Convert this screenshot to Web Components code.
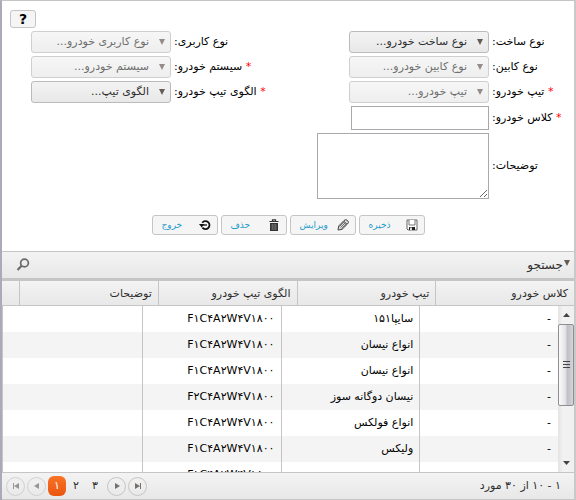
<!DOCTYPE html>
<html lang="fa" dir="rtl">
<head>
<meta charset="utf-8">
<title>تیپ خودرو</title>
<style>
  body { margin: 0; font: 11px/16px "DejaVu Sans", "Noto Sans", sans-serif; color: #000; background: #fff; }
</style>
</head>
<body>
<vehicle-page></vehicle-page>
<script>
class Base extends HTMLElement {
  constructor() { super(); this.attachShadow({ mode: "open" }); }
  connectedCallback() { this.shadowRoot.innerHTML = this.render(); }
}

customElements.define("select-field", class extends Base {
  render() {
    const off = this.hasAttribute("disabled");
    return `<style>
      :host { display: grid; grid-template-columns: var(--label, 82px) 1fr; column-gap: 3px; align-items: center; }
      label { text-align: left; }
      b { color: #f00; font-weight: normal; }
      select { appearance: none; box-sizing: border-box; justify-self: start; width: 140px; height: 22px; margin: 0; padding: 0 21px 0 4px;
        border: 1px solid #bbb; border-radius: 3px; font: inherit; color: #2e2e2e; opacity: 1;
        background: url("data:image/svg+xml,%3Csvg xmlns='http://www.w3.org/2000/svg' width='6' height='6'%3E%3Cpath d='M0 0h6L3 6z' fill='%23665c56'/%3E%3C/svg%3E") right 5px center no-repeat, linear-gradient(#f3f3f3, #e8e8e8); }
      select:disabled { opacity: .7; color: #2e2e2e; }
    </style>
    <label for="f">${this.hasAttribute("required") ? "<b>*</b> " : ""}${this.getAttribute("label")}:</label>
    <select id="f"${off ? " disabled" : ""}><option>${this.getAttribute("placeholder")}...</option></select>`;
  }
});

customElements.define("text-field", class extends Base {
  render() {
    const area = this.hasAttribute("multiline");
    return `<style>
      :host { display: grid; grid-template-columns: var(--label, 82px) 1fr; column-gap: 3px; align-items: center; }
      label { text-align: left; }
      b { color: #f00; font-weight: normal; }
      input, textarea { display: block; box-sizing: border-box; justify-self: start; margin: 0; padding: 2px; border: 1px solid #a9a9ad; background: #fff; font: inherit; }
      input { width: 138px; height: 24px; }
      textarea { width: 172px; height: 66px; }
    </style>
    <label for="f">${this.hasAttribute("required") ? "<b>*</b> " : ""}${this.getAttribute("label")}:</label>
    ${area ? '<textarea id="f" dir="ltr"></textarea>' : '<input id="f" type="text">'}`;
  }
});

customElements.define("form-column", class extends Base {
  render() {
    return `<style>:host { display: flex; flex-direction: column; gap: 3px; }</style><slot></slot>`;
  }
});

customElements.define("action-button", class extends Base {
  render() {
    return `<style>
      :host { display: block; }
      button { display: flex; align-items: center; justify-content: space-between; box-sizing: border-box; width: 66px; height: 20px; margin: 0;
        padding: 0 6px 0 9px; border: 1px solid #c5c5c5; border-radius: 3px; background: #f5f5f5; color: #1c9bcb; font: inherit; font-size: 9px; }
      ::slotted(svg) { width: 12px; height: 12px; display: block; }
    </style>
    <button type="button"><slot name="icon"></slot><span><slot></slot></span></button>`;
  }
});

customElements.define("help-button", class extends Base {
  render() {
    return `<style>
      :host { display: block; }
      button { display: block; box-sizing: border-box; width: 26px; height: 18px; margin: 0; padding: 0; border: 1px solid #c5c5c5; border-radius: 3px;
        background: #f5f5f5; color: #000; font: bold 14px/16px "DejaVu Sans", sans-serif; }
    </style><button type="button" aria-label="راهنما">?</button>`;
  }
});

customElements.define("search-bar", class extends Base {
  render() {
    return `<style>
      :host { display: flex; align-items: center; justify-content: space-between; height: 26px; padding: 0 4px 0 14px;
        border-top: 1px solid #c5c5c5; border-bottom: 3px solid #c5c5c5; background: linear-gradient(#f3f3f3, #e8e8e8); color: #2e2e2e; font-size: 12px; }
      button { display: flex; align-items: center; gap: 1px; border: 0; padding: 0; background: none; font: inherit; color: inherit; }
      button svg { margin-bottom: 4px; }
    </style>
    <button type="button"><svg width="6" height="6"><path d="M0 0h6L3 6z" fill="#665c56"/></svg><span>جستجو</span></button>
    <button type="button" aria-label="یافتن"><svg width="14" height="14" style="margin:0" viewBox="0 0 14 14" fill="none" stroke="#6b6b6b"><circle cx="8.5" cy="5" r="3.9" stroke-width="1.7"/><path d="M5.6 7.8 1.5 12" stroke-width="2.2"/></svg></button>`;
  }
});

customElements.define("scroll-bar", class extends Base {
  render() {
    return `<style>
      :host { display: flex; flex-direction: column; width: 16px; background: linear-gradient(90deg, #e3e3e3, #f2f2f2 30%, #f0f0f0); }
      button { display: grid; place-items: center; height: 18px; border: 0; padding: 0; background: none; }
      .thumb { display: grid; place-items: center; box-sizing: border-box; height: 82px; border: 1px solid #8f8f93; border-radius: 2px; background: linear-gradient(90deg, #fafafa, #e4e4e7 45%, #bfbfc6 60%, #d4d4da); }
      .space { flex: 1; }
      svg { display: block; }
    </style>
    <button type="button" aria-label="بالا"><svg width="7" height="4"><path d="M0 4h7L3.500 0z" fill="#444"/></svg></button>
    <div class="thumb"><svg width="7" height="8" stroke="#444"><path d="M0 .5h7M0 3.500h7M0 6.500h7"/></svg></div>
    <div class="space"></div>
    <button type="button" aria-label="پایین"><svg width="7" height="4"><path d="M0 0h7L3.500 4z" fill="#444"/></svg></button>`;
  }
});

const HEADS = ["کلاس خودرو", "تیپ خودرو", "الگوی تیپ خودرو", "توضیحات"];
const ROWS = [
  ["-", "سایپا۱۵۱", "F۱C۴A۲W۴V۱۸۰۰", ""],
  ["-", "انواع نیسان", "F۱C۴A۲W۴V۱۸۰۰", ""],
  ["-", "انواع نیسان", "F۱C۴A۲W۴V۱۸۰۰", ""],
  ["-", "نیسان دوگانه سوز", "F۲C۴A۲W۴V۱۸۰۰", ""],
  ["-", "انواع فولکس", "F۱C۴A۲W۴V۱۸۰۰", ""],
  ["-", "ولیکس", "F۱C۴A۲W۴V۱۸۰۰", ""],
  ["", "", "F۱C۴A۲W۴V۱۸۰۰", ""]
];

customElements.define("vehicle-grid", class extends Base {
  render() {
    return `<style>
      :host { display: block; }
      table { width: 100%; table-layout: fixed; border-collapse: separate; border-spacing: 0; }
      th, td { box-sizing: border-box; text-align: right; font-weight: normal; padding: 0 6px; white-space: nowrap; overflow: hidden; }
      .head { background: linear-gradient(#f3f3f3, #e8e8e8); border-bottom: 1px solid #c5c5c5; color: #2e2e2e; }
      .head th, .head td { height: 24px; }
      th { padding-top: 2px; border-left: 1px solid #c5c5c5; }
      .head .pad { width: 17px; border: 0; padding: 0; }
      .body { display: flex; height: 166px; border-left: 1px solid #c5c5c5; overflow: hidden; }
      .view { flex: 1; overflow: hidden; }
      td { height: 26px; border-left: 1px solid #c5c5c5; }
      td:first-child { padding: 0 7px; }
      td:last-child { border-left: 0; }
      tr:nth-child(even) td { background: #f4f4f4; }
    </style>
    <div class="head"><table><thead><tr>${HEADS.map(h => `<th scope="col">${h}</th>`).join("")}<td class="pad"></td></tr></thead></table></div>
    <div class="body"><scroll-bar></scroll-bar><div class="view"><table><tbody>${ROWS.map(r => `<tr>${r.map(c => `<td>${c}</td>`).join("")}</tr>`).join("")}</tbody></table></div></div>`;
  }
});

customElements.define("grid-pager", class extends Base {
  render() {
    const a = (label, d) => `<a href="#" class="nav" aria-label="${label}"><svg width="8" height="8" viewBox="0 0 8 8" fill="currentColor"><path d="${d}"/></svg></a>`;
    return `<style>
      :host { display: flex; align-items: center; justify-content: space-between; height: 26px; padding: 0 13px 0 4px; border-top: 1px solid #c5c5c5; border-bottom: 1px solid #c5c5c5;
        background: linear-gradient(#f3f3f3, #e8e8e8); color: #2e2e2e; }
      nav { display: flex; align-items: center; gap: 1px; direction: ltr; }
      a { display: grid; place-items: center; box-sizing: border-box; width: 18px; height: 20px; color: #2e2e2e; text-decoration: none; }
      .nav { width: 19px; height: 19px; border: 1px solid #c5c5c5; border-radius: 50%; color: #75706c; }
      .off { display: flex; gap: 2px; padding-right: 1px; opacity: .7; }
      .on { border-radius: 6px; background: linear-gradient(#f97327, #e9560f); color: #fff; }
      .last { display: flex; gap: 2px; padding-left: 2px; }
    </style>
    <span>۱ - ۱۰ از ۳۰ مورد</span>
    <nav aria-label="صفحه‌ها"><span class="off">${a("اولین", "M1 1h1v6H1zM7 1v6L2 4z")}${a("قبلی", "M6 1v6L1 4z")}</span>
    <a href="#" class="on" aria-current="page">۱</a><a href="#">۲</a><a href="#">۳</a>
    <span class="last">${a("بعدی", "M2 1v6l5-3z")}${a("آخرین", "M6 1h1v6H6zM1 1v6l5-3z")}</span></nav>`;
  }
});

customElements.define("vehicle-page", class extends Base {
  render() {
    return `<style>
      :host { display: block; border-left: 2px solid #a9abb9; border-right: 2px solid #c9c9c9; border-top: 1px solid #c5c5c5; }
      .top { display: flex; justify-content: flex-end; padding: 9px 0 3px 8px; }
      form { display: flex; margin: 0; }
      form-column:last-child { flex: 1; padding-left: 29px; --label: 1fr; }
      form-column:last-child > * { grid-template-columns: 1fr 140px; }
      .actions { display: flex; justify-content: center; gap: 3px; padding: 16px 0; }
    </style>
    <div class="top"><help-button></help-button></div>
    <form>
      <form-column>
        <select-field label="نوع ساخت" placeholder="نوع ساخت خودرو"></select-field>
        <select-field label="نوع کابین" placeholder="نوع کابین خودرو" disabled></select-field>
        <select-field label="تیپ خودرو" placeholder="تیپ خودرو" required disabled></select-field>
        <text-field label="کلاس خودرو" required></text-field>
        <text-field label="توضیحات" multiline></text-field>
      </form-column>
      <form-column>
        <select-field label="نوع کاربری" placeholder="نوع کاربری خودرو" disabled></select-field>
        <select-field label="سیستم خودرو" placeholder="سیستم خودرو" required disabled></select-field>
        <select-field label="الگوی تیپ خودرو" placeholder="الگوی تیپ" required></select-field>
      </form-column>
    </form>
    <div class="actions">
      <action-button><svg slot="icon" viewBox="0 0 12 12"><path d="M1 1h10v10H2l-1-1z" fill="#fff" stroke="#666"/><path d="M3 1v5h6V1" fill="#fff" stroke="#777"/><path d="M3 8h6v3H3z" fill="#222"/><path d="M4 8.500h2V11H4z" fill="#ddd"/></svg>ذخیره</action-button>
      <action-button><svg slot="icon" viewBox="0 0 12 12"><path d="M1 11 1.700 7 7 1.500Q8.800-.2 10.600 1.500T10.500 5L5 10.400z" fill="#ddd" stroke="#444"/><path d="M2.500 7.500 8 2M4.500 9.500 10 4M3.500 8.500 9 3M6.200 2.600l3.200 3.200" fill="none" stroke="#555" stroke-width=".8"/></svg>ویرایش</action-button>
      <action-button><svg slot="icon" viewBox="0 0 12 12"><path d="M1.500 2.500h9M4.500 2V.8h3V2" fill="none" stroke="#333" stroke-width="1.200"/><path d="M2 4h8v8H2z" fill="#333"/><path d="M4.200 5v6M6 5v6M7.800 5v6" stroke="#999" stroke-width=".7"/></svg>حذف</action-button>
      <action-button><svg slot="icon" viewBox="0 0 12 12"><path d="M3.300 3.700A4 4 0 1 1 3.400 8.700" fill="none" stroke="#111" stroke-width="1.800"/><path d="M0 5h5.400L2.700 8.500z" fill="#111"/><path d="M4 6h4" stroke="#111" stroke-width="1.300"/></svg>خروج</action-button>
    </div>
    <search-bar></search-bar>
    <vehicle-grid></vehicle-grid>
    <grid-pager></grid-pager>`;
  }
});
</script>
</body>
</html>
